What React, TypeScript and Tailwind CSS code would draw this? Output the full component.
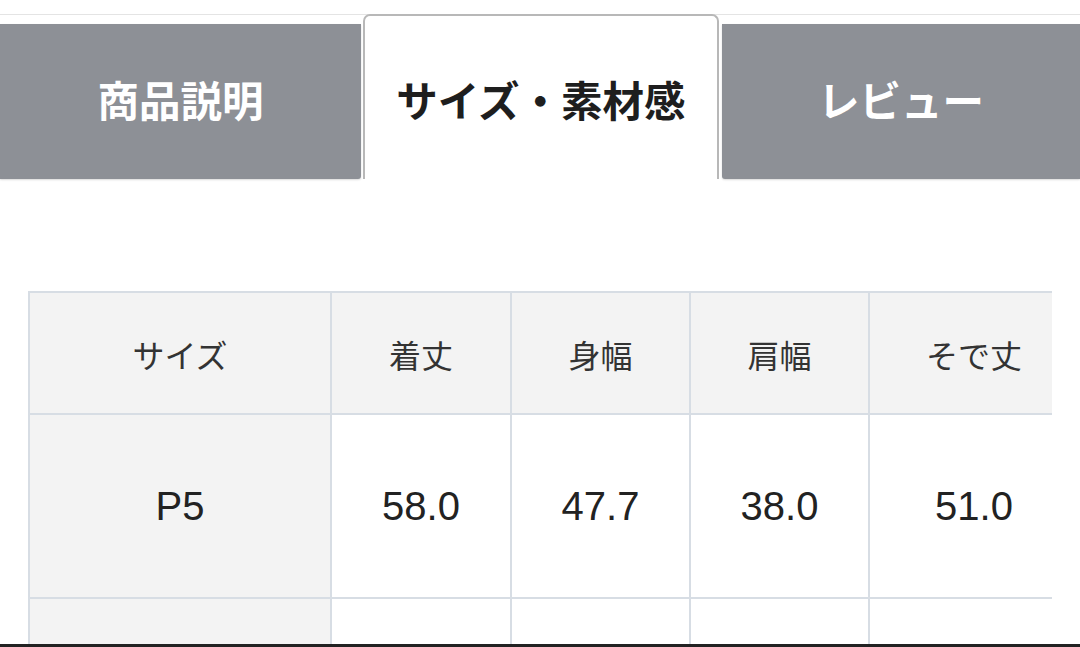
import React from "react";

const jp = { fontFamily: '"Noto Sans CJK JP", "Noto Sans", sans-serif' };
const num = { fontFamily: '"Liberation Sans", Arial, "Noto Sans CJK JP", sans-serif' };

const headers = ["サイズ", "着丈", "身幅", "肩幅", "そで丈"];
const row = ["P5", "58.0", "47.7", "38.0", "51.0"];

export default function App() {
  return (
    <div className="w-[1080px] h-[647px] overflow-hidden bg-white flex flex-col">
      <div className="h-[15px] shrink-0 border-b border-[#e4e4e4]" />
      <div className="flex items-end h-[165px] shrink-0 -mt-px">
        <div className="w-[361px] h-[155px] bg-[#8d9096] rounded-br-[3px] flex items-center justify-center pb-[4px] shadow-[0_1px_2px_rgba(0,0,0,0.15)]">
          <span className="text-[41.5px] font-bold text-white leading-none" style={jp}>
            商品説明
          </span>
        </div>
        <div className="w-[2px]" />
        <div className="w-[356px] h-[165px] bg-white border-2 border-b-0 border-[#b8b8b8] rounded-t-[7px] flex items-center justify-center pt-[4px]">
          <span className="text-[41.5px] font-bold text-[#1e1e1e] leading-none" style={jp}>
            サイズ・素材感
          </span>
        </div>
        <div className="w-[3px]" />
        <div className="flex-1 h-[155px] bg-[#8d9096] rounded-bl-[3px] flex items-center justify-center pb-[4px] shadow-[0_1px_2px_rgba(0,0,0,0.15)]">
          <span className="text-[41.5px] font-bold text-white leading-none" style={jp}>
            レビュー
          </span>
        </div>
      </div>
      <div className="mt-[112px] ml-[28px] w-[1024px] overflow-hidden flex-1 min-h-0">
        <div className="w-[1052px] grid grid-cols-[300px_178px_177px_177px_208px] grid-rows-[120px_182px_182px] gap-[2px] p-[2px] bg-[#d7dde4]">
          {headers.map((h) => (
            <div key={h} className="bg-[#f3f3f3] flex items-center justify-center pt-[2px]">
              <span className="text-[32px] text-[#333] leading-none" style={jp}>
                {h}
              </span>
            </div>
          ))}
          {row.map((v, i) => (
            <div
              key={i}
              className={`${i === 0 ? "bg-[#f3f3f3]" : "bg-white"} flex items-center justify-center`}
            >
              <span className="text-[40px] text-[#222] leading-none" style={num}>
                {v}
              </span>
            </div>
          ))}
          {row.map((_, i) => (
            <div key={"r" + i} className={i === 0 ? "bg-[#f3f3f3]" : "bg-white"} />
          ))}
        </div>
      </div>
      <div className="h-[3px] shrink-0 bg-[#222]" />
    </div>
  );
}
